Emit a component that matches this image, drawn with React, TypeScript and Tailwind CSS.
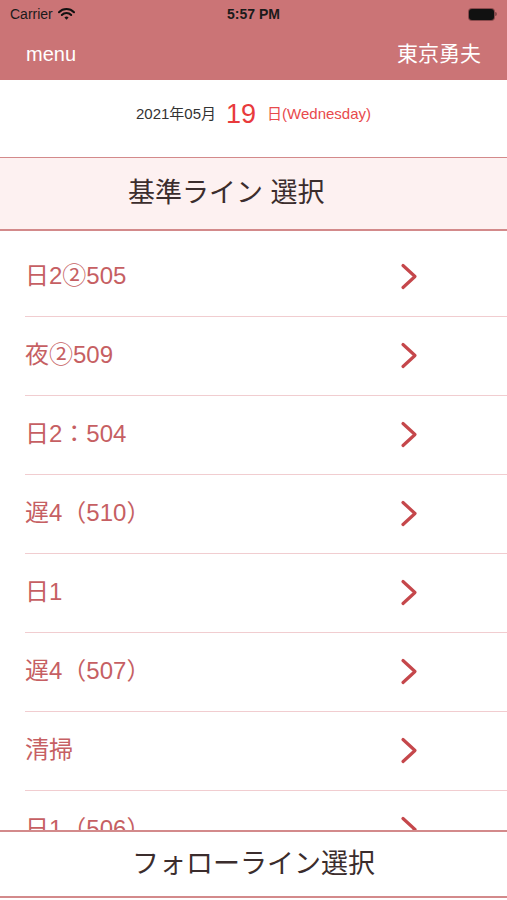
const lines = ['日2②505', '夜②509', '日2：504', '遅4（510）', '日1', '遅4（507）', '清掃', '日1（506）']

const font = { fontFamily: '"Liberation Sans", "Noto Sans CJK JP", sans-serif' }

function StatusBar() {
  return (
    <div className="relative flex h-[28px] items-center px-[10px] text-[14px] text-[#1a1a1a]">
      <div className="flex items-center gap-[5px]">
        <span>Carrier</span>
        <svg width="17" height="12" viewBox="0 0 17 12" aria-hidden="true">
          <path d="M1 4.2a10.5 10.5 0 0 1 15 0" fill="none" stroke="#111" strokeWidth="2" strokeLinecap="round" />
          <path d="M3.8 7a6.5 6.5 0 0 1 9.4 0" fill="none" stroke="#111" strokeWidth="2" strokeLinecap="round" />
          <path d="M6.4 9.6 8.5 11.7 10.6 9.6a3 3 0 0 0-4.2 0z" fill="#111" />
        </svg>
      </div>
      <div className="absolute left-0 right-0 text-center font-semibold">5:57 PM</div>
      <div className="ml-auto flex items-center">
        <div className="h-[11px] w-[25px] rounded-[3px] bg-[#111] ring-1 ring-[#8a4a4c]" />
        <div className="ml-[1px] h-[4px] w-[2px] rounded-r-sm bg-[#8a4a4c]" />
      </div>
    </div>
  )
}

function Chevron() {
  return (
    <svg className="ml-auto mr-[89px] shrink-0" width="18" height="27" viewBox="0 0 18 27" aria-hidden="true">
      <polyline points="3,2.5 15,13.5 3,24.5" fill="none" stroke="#c5474b" strokeWidth="3.2" strokeLinecap="round" strokeLinejoin="round" />
    </svg>
  )
}

export default function App() {
  return (
    <div className="flex h-[900px] w-[507px] flex-col overflow-hidden bg-white" style={font}>
      {/* Header */}
      <div className="h-[80px] shrink-0 bg-[#cb7476]">
        <StatusBar />
        <div className="flex h-[52px] items-center justify-between pl-[26px] pr-[26px] text-white">
          <span className="text-[20px]">menu</span>
          <span className="text-[21px]">東京勇夫</span>
        </div>
      </div>

      {/* Date */}
      <div className="flex h-[77px] shrink-0 items-center justify-center pb-[8px]">
        <span className="text-[15px] text-[#333]">2021年05月</span>
        <span className="ml-[10px] mr-[11px] text-[27px] text-[#e83a3c]">19</span>
        <span className="text-[15px] text-[#e84a4c]">日(Wednesday)</span>
      </div>

      {/* Section header */}
      <div className="flex h-[74px] shrink-0 items-center border-t border-b-2 border-[#d38a8b] bg-[#fdf1f1] pl-[128px] text-[27px] text-[#3b2d2d]">
        基準ライン 選択
      </div>

      {/* List */}
      <div className="min-h-0 flex-1 overflow-hidden pt-[7px]">
        {lines.map((line) => (
          <div key={line} className="ml-[25px] flex h-[79px] shrink-0 items-center border-b border-[#f1cdd0] pb-[2px]">
            <span className="text-[24px] text-[#c65f63]">{line}</span>
            <Chevron />
          </div>
        ))}
      </div>

      {/* Footer */}
      <div className="flex h-[68px] shrink-0 items-center justify-center border-t-2 border-b-2 border-[#d38a8b] bg-white text-[27px] text-[#3b2d2d]">
        フォローライン選択
      </div>
      <div className="h-[2px] shrink-0" />
    </div>
  )
}
